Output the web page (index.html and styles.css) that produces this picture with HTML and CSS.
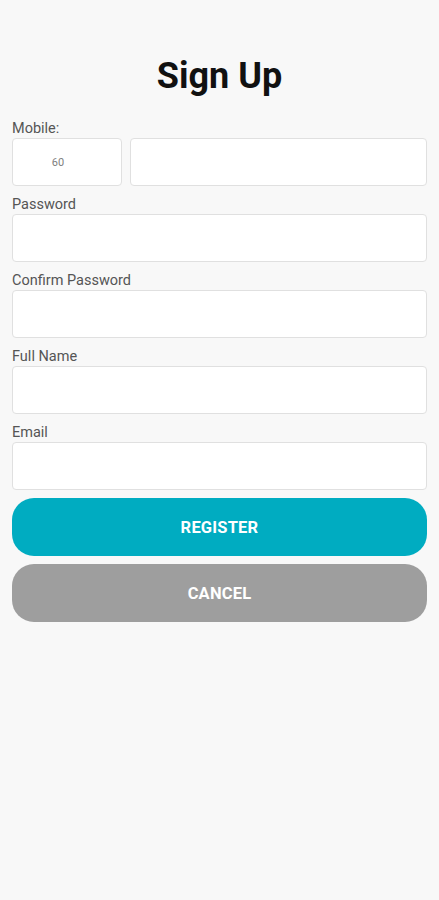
FILE: index.html
```html
<!doctype html>
<html>
    <head>
        <meta charset="utf-8"/>
        <title>Sign Up</title>
        <link rel="stylesheet" href="styles.css">
    </head>
    <body>
        <main class="signup">
            <h1 class="title">Sign Up</h1>
            <form class="form">
                <div class="field">
                    <label class="label">Mobile:</label>
                    <div class="mobile-row">
                        <input class="input code" type="text" value="60">
                        <input class="input" type="tel">
                    </div>
                </div>
                <div class="field">
                    <label class="label">Password</label>
                    <input class="input" type="password">
                </div>
                <div class="field">
                    <label class="label">Confirm Password</label>
                    <input class="input" type="password">
                </div>
                <div class="field">
                    <label class="label">Full Name</label>
                    <input class="input" type="text">
                </div>
                <div class="field">
                    <label class="label">Email</label>
                    <input class="input" type="email">
                </div>
                <div class="actions">
                    <button class="btn btn-register" type="button">Register</button>
                    <button class="btn btn-cancel" type="button">Cancel</button>
                </div>
            </form>
        </main>
    </body>
</html>
```

FILE: styles.css
```css
* {
    margin: 0;
    padding: 0;
    box-sizing: border-box;
}
html, body {
    background-color: #f8f8f8;
}
body {
    font-family: Roboto, "Noto Sans", sans-serif;
    color: #222;
}
.signup {
    padding: 52px 12px 0;
}
.title {
    font-size: 36px;
    font-weight: 700;
    line-height: 48px;
    text-align: center;
    color: #111;
    margin-bottom: 10px;
}
.form {
    display: flex;
    flex-direction: column;
}
.field {
    display: flex;
    flex-direction: column;
}
.label {
    font-size: 14.5px;
    line-height: 19px;
    height: 28px;
    padding-top: 9px;
    color: #555;
}
.mobile-row {
    display: flex;
    gap: 8px;
}
.input {
    display: block;
    width: 100%;
    height: 48px;
    border: 1px solid #e0e0e0;
    border-radius: 4px;
    background-color: #fff;
    font-family: Roboto, sans-serif;
    font-size: 14px;
    padding: 0 10px;
    outline: none;
}
.mobile-row .input {
    flex: 1;
}
.mobile-row .code {
    flex: 0 0 110px;
    text-align: center;
    padding: 0 18px 0 0;
    font-size: 11px;
    color: #808080;
}
.actions {
    display: flex;
    flex-direction: column;
    gap: 8px;
    margin-top: 8px;
}
.btn {
    height: 58px;
    border: none;
    border-radius: 22px;
    color: #fff;
    font-family: Roboto, sans-serif;
    font-size: 16.5px;
    font-weight: 700;
    text-transform: uppercase;
    letter-spacing: 0.2px;
}
.btn-register {
    background-color: #00acc1;
}
.btn-cancel {
    background-color: #9e9e9e;
}
```
